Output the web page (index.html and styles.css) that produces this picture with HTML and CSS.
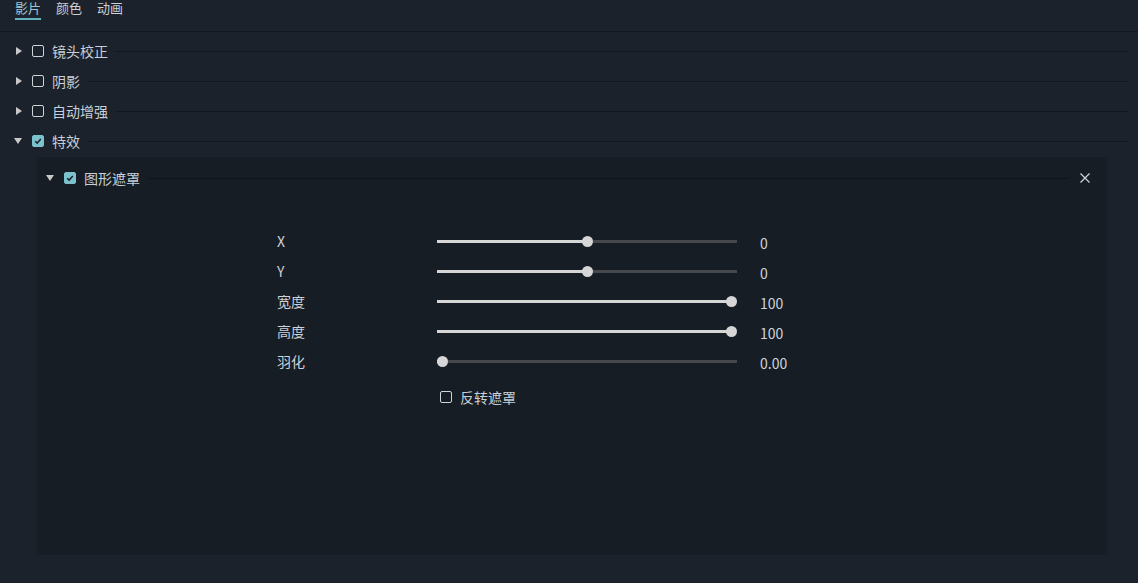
FILE: index.html
```html
<!DOCTYPE html>
<html lang="zh">
<head>
<meta charset="utf-8">
<link rel="stylesheet" href="styles.css">
</head>
<body>
<div class="tabs">
  <div class="tab active">影片</div>
  <div class="tab">颜色</div>
  <div class="tab">动画</div>
</div>
<div class="sections">
  <div class="row">
    <span class="tri right"></span>
    <span class="cb"></span>
    <span class="label">镜头校正</span>
    <span class="line"></span>
  </div>
  <div class="row">
    <span class="tri right"></span>
    <span class="cb"></span>
    <span class="label">阴影</span>
    <span class="line"></span>
  </div>
  <div class="row">
    <span class="tri right"></span>
    <span class="cb"></span>
    <span class="label">自动增强</span>
    <span class="line"></span>
  </div>
  <div class="row">
    <span class="tri down"></span>
    <span class="cb checked"><svg viewBox="0 0 12 12" width="12" height="12"><path d="M2.6 6.2 L5 8.5 L9.4 3.6" fill="none" stroke="#1a2129" stroke-width="1.8"/></svg></span>
    <span class="label">特效</span>
    <span class="line"></span>
  </div>
  <div class="panel">
    <div class="panel-head">
      <span class="tri down"></span>
      <span class="cb checked"><svg viewBox="0 0 12 12" width="12" height="12"><path d="M2.6 6.2 L5 8.5 L9.4 3.6" fill="none" stroke="#1a2129" stroke-width="1.8"/></svg></span>
      <span class="label">图形遮罩</span>
      <span class="line dotted"></span>
      <svg class="close" viewBox="0 0 12 12" width="12" height="12"><path d="M1.5 1.5 L10.5 10.5 M10.5 1.5 L1.5 10.5" stroke="#d0d4d8" stroke-width="1.2" fill="none"/></svg>
    </div>
    <div class="params">
      <div class="prow">
        <span class="plabel">X</span>
        <div class="slider" style="--p:0.5"><div class="fill"></div><div class="thumb"></div></div>
        <span class="pval">0</span>
      </div>
      <div class="prow">
        <span class="plabel">Y</span>
        <div class="slider" style="--p:0.5"><div class="fill"></div><div class="thumb"></div></div>
        <span class="pval">0</span>
      </div>
      <div class="prow">
        <span class="plabel">宽度</span>
        <div class="slider" style="--p:1"><div class="fill"></div><div class="thumb"></div></div>
        <span class="pval">100</span>
      </div>
      <div class="prow">
        <span class="plabel">高度</span>
        <div class="slider" style="--p:1"><div class="fill"></div><div class="thumb"></div></div>
        <span class="pval">100</span>
      </div>
      <div class="prow">
        <span class="plabel">羽化</span>
        <div class="slider" style="--p:0"><div class="fill"></div><div class="thumb"></div></div>
        <span class="pval">0.00</span>
      </div>
      <div class="invert">
        <span class="cb"></span>
        <span class="label">反转遮罩</span>
      </div>
    </div>
  </div>
</div>
</body>
</html>
```
FILE: styles.css
```css
html, body {
  margin: 0;
  padding: 0;
  background: #1c222b;
  width: 1138px;
  height: 583px;
  overflow: hidden;
  font-family: "Noto Sans CJK SC", "Noto Sans", sans-serif;
  color: #c9d0d7;
}

.tabs {
  display: flex;
  gap: 15px;
  padding-left: 15px;
  height: 31px;
  border-bottom: 1px solid #141920;
  box-sizing: content-box;
}
.tab {
  font-size: 13px;
  line-height: 16px;
  height: 20px;
  box-sizing: border-box;
  padding-top: 0;
  color: #c9d0d7;
}
.tab.active {
  color: #9cc6d6;
  border-bottom: 2px solid #62b3bf;
}

.sections {
  padding-top: 4px;
}
.row {
  display: flex;
  align-items: center;
  height: 30px;
  padding-left: 15px;
  padding-right: 10px;
}
.tri {
  width: 0;
  height: 0;
  flex: none;
}
.tri.right {
  border-top: 4px solid transparent;
  border-bottom: 4px solid transparent;
  border-left: 6px solid #c8c8c8;
  margin-left: 1px;
  margin-right: 10px;
}
.tri.down {
  border-left: 4px solid transparent;
  border-right: 4px solid transparent;
  border-top: 6px solid #c8c8c8;
  margin-left: -1px;
  margin-right: 10px;
}
.cb {
  flex: none;
  width: 12px;
  height: 12px;
  box-sizing: border-box;
  border: 1px solid #cfd3d6;
  border-radius: 2px;
  display: flex;
  align-items: center;
  justify-content: center;
}
.cb.checked {
  background: #7cc2cd;
  border-color: #7cc2cd;
}
.cb svg {
  display: block;
}
.label {
  font-size: 14px;
  line-height: 18px;
  margin-left: 8px;
  color: #c9d0d7;
  white-space: nowrap;
}
.row .label {
  margin-left: 8px;
}
.line {
  flex: 1;
  height: 1px;
  background: #12171d;
  margin-left: 8px;
  margin-top: 1px;
}

.panel {
  margin-left: 37px;
  width: 1070px;
  height: 398px;
  margin-top: 1px;
  background: #171d25;
}
.panel-head {
  display: flex;
  align-items: center;
  height: 42px;
  padding-left: 10px;
  padding-right: 16px;
}
.panel-head .line.dotted {
  background: #111519;
  margin-right: 10px;
}
.close {
  flex: none;
  display: block;
}

.params {
  padding-top: 28px;
  padding-left: 240px;
}
.prow {
  display: flex;
  align-items: center;
  height: 30px;
}
.plabel {
  width: 160px;
  font-size: 14px;
  color: #cbd2d9;
  margin-top: -2px;
}
.slider {
  position: relative;
  width: 300px;
  height: 3px;
  background: #45494e;
  margin-top: -1px;
}
.fill {
  position: absolute;
  left: 0;
  top: 0;
  height: 3px;
  width: calc((100% - 10px) * var(--p) + 5px);
  background: #d6d6d6;
}
.thumb {
  position: absolute;
  top: -4px;
  left: calc((100% - 11px) * var(--p));
  width: 11px;
  height: 11px;
  border-radius: 50%;
  background: #d6d6d6;
}
.pval {
  margin-left: 23px;
  font-size: 14px;
  color: #cdd5dd;
  margin-top: 2px;
}
.invert {
  display: flex;
  align-items: center;
  height: 30px;
  margin-top: 5px;
  margin-left: 163px;
}
```
